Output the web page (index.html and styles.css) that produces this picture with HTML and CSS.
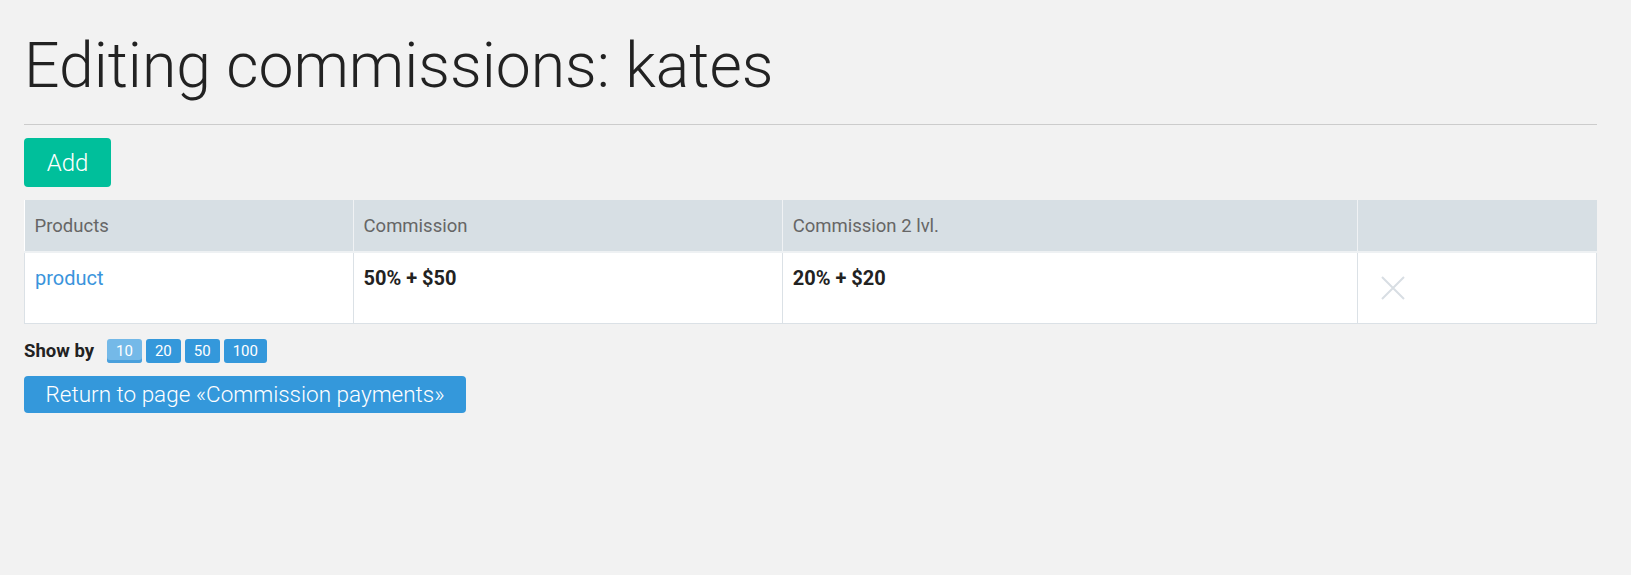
FILE: index.html
```html
<!DOCTYPE html>
<html>
<head>
<meta charset="utf-8">
<link rel="stylesheet" href="styles.css">
</head>
<body>
<div class="page">
  <h1 class="title">Editing commissions: kates</h1>
  <div class="rule"></div>
  <button class="btn-add">Add</button>
  <table class="grid">
    <colgroup>
      <col class="c1"><col class="c2"><col class="c3"><col class="c4">
    </colgroup>
    <thead>
      <tr><th>Products</th><th>Commission</th><th>Commission 2 lvl.</th><th></th></tr>
    </thead>
    <tbody>
      <tr>
        <td><a class="link" href="#">product</a></td>
        <td class="val">50% + $50</td>
        <td class="val">20% + $20</td>
        <td class="del"><svg class="x" viewBox="0 0 26 26" width="26" height="26"><path d="M2 2 L24 24 M24 2 L2 24" stroke="#d8dee3" stroke-width="2" fill="none"/></svg></td>
      </tr>
    </tbody>
  </table>
  <div class="showby">
    <span class="showby-label">Show by</span>
    <span class="pages">
      <span class="pg active">10</span>
      <span class="pg">20</span>
      <span class="pg">50</span>
      <span class="pg">100</span>
    </span>
  </div>
  <button class="btn-return">Return to page «Commission payments»</button>
</div>
</body>
</html>
```
FILE: styles.css
```css
html, body { margin: 0; padding: 0; }
body { background: #f2f2f2; font-family: Roboto, "Noto Sans", sans-serif; color: #222; }
.page { padding: 29px 34px 0 24px; }
.title { margin: 0; font-weight: 300; font-size: 62.5px; line-height: 74px; color: #222; letter-spacing: 0; }
.rule { height: 1px; background: #cccccc; margin-top: 21px; }
.btn-add { display: block; margin-top: 13px; width: 87px; height: 49px; border: 0; border-radius: 4px; background: #00bf9b; color: #fff; font-family: Roboto, sans-serif; font-weight: 300; font-size: 24px; padding: 0; }
.grid { margin-top: 13px; width: 100%; border-collapse: collapse; background: #fff; }
.c1 { width: 20.9%; } .c2 { width: 27.3%; } .c3 { width: 36.6%; } .c4 { width: 15.2%; }
.grid th { background: #d7dfe4; color: #666; font-weight: 400; font-size: 18.5px; text-align: left; height: 51px; padding: 0 10px; border-left: 1px solid #f0f2f4; border-bottom: 2px solid #eef1f3; }
.grid th:first-child { border-left: 0; }
.grid td { height: 71px; vertical-align: top; padding: 13px 10px 0; font-size: 20px; border: 1px solid #dbe1e6; box-sizing: border-box; }
.link { color: #3a94dc; text-decoration: none; font-size: 20px; }
.val { font-weight: 700; color: #222; }
.grid td.del { vertical-align: middle; padding: 0 0 0 22px; }
.x { display: block; }
.showby { display: flex; align-items: center; margin-top: 15px; }
.showby-label { font-weight: 700; font-size: 18.5px; color: #222; margin-right: 13px; }
.pages { display: flex; gap: 4px; }
.pg { display: inline-block; height: 24px; line-height: 24px; padding: 0 9px; background: #3498db; color: #fff; font-size: 15px; border-radius: 3px; }
.pg.active { background: #74b9e8; box-shadow: inset 0 -3px 0 #4aa0dc; }
.btn-return { display: block; margin-top: 13px; height: 37px; width: 442px; border: 0; border-radius: 4px; background: #3498db; color: #fff; font-family: Roboto, sans-serif; font-weight: 300; font-size: 22.5px; padding: 0; }
```
